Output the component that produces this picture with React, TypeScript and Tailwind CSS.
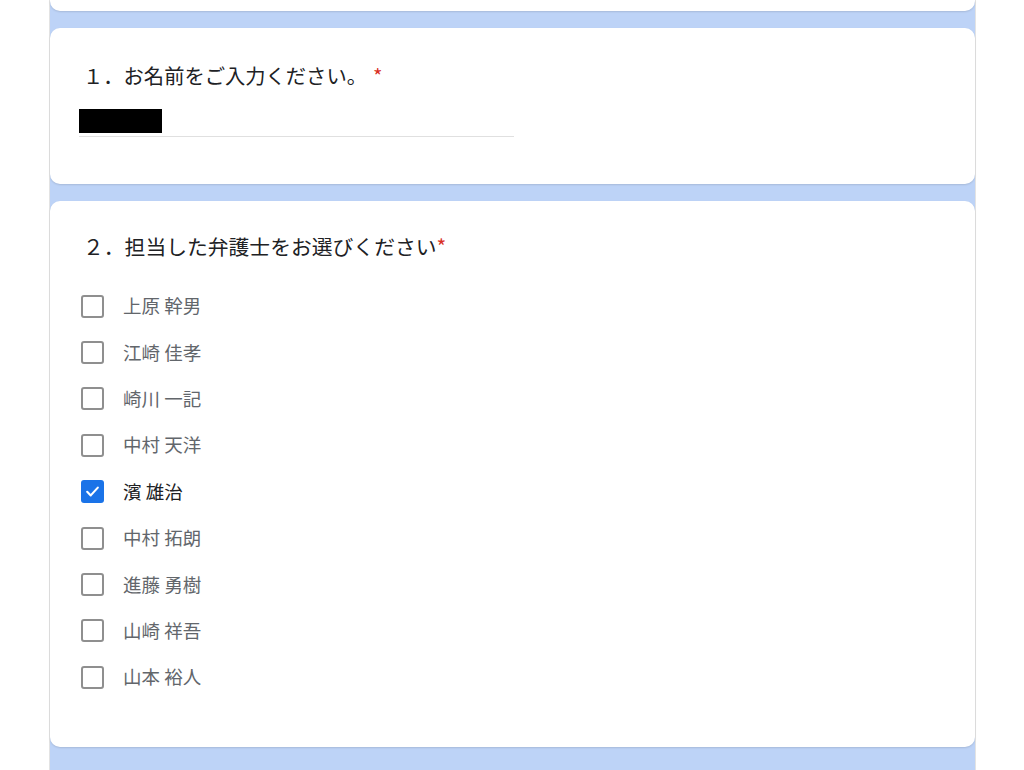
const lawyers = [
  "上原 幹男",
  "江崎 佳孝",
  "崎川 一記",
  "中村 天洋",
  "濱 雄治",
  "中村 拓朗",
  "進藤 勇樹",
  "山崎 祥吾",
  "山本 裕人",
];

const checked = "濱 雄治";

const font = "font-['Noto_Sans_CJK_JP','Noto_Sans',sans-serif]";

function Checkbox({ on }: { on: boolean }) {
  if (on) {
    return (
      <div className="flex h-[23px] w-[23px] shrink-0 items-center justify-center rounded-[3px] bg-[#1a73e8]">
        <svg width="17" height="17" viewBox="0 0 24 24" fill="none" stroke="white" strokeWidth="3" strokeLinecap="round" strokeLinejoin="round">
          <polyline points="4.5 12.5 9.5 17.5 19.5 6.5" />
        </svg>
      </div>
    );
  }
  return <div className="h-[23px] w-[23px] shrink-0 rounded-[3px] border-2 border-[#8f8f8f] bg-white" />;
}

export default function App() {
  return (
    <div className={`h-[770px] overflow-hidden bg-white ${font}`}>
      <div className="ml-[49px] h-full w-[927px] border-x border-[#e3e3e3] bg-[#bdd3f7]">
        {/* 前の設問の末尾 */}
        <div className="h-[11px] rounded-b-[10px] bg-white shadow-[0_1px_2px_rgba(0,0,0,0.12)]" />

        {/* 設問1 */}
        <div className="mt-[17px] h-[156px] rounded-[10px] bg-white px-[29px] pt-[33px] shadow-[0_1px_2px_rgba(0,0,0,0.12)]">
          <h2 className="ml-[4px] text-[20.3px] leading-[28px] text-[#202124]">
            １．お名前をご入力ください。
            <span className="ml-[6px] text-[#d93025]">*</span>
          </h2>
          <div className="mt-[20px] w-[435px] border-b border-[#e0e0e0] pb-[3px]">
            <div className="h-[24px] w-[83px] bg-black" />
          </div>
        </div>

        {/* 設問2 */}
        <div className="mt-[17px] h-[546px] rounded-[10px] bg-white px-[31px] pt-[31px] shadow-[0_1px_2px_rgba(0,0,0,0.12)]">
          <h2 className="ml-[2px] text-[20.8px] leading-[28px] text-[#202124]">
            ２．担当した弁護士をお選びください
            <span className="text-[#d93025]">*</span>
          </h2>
          <ul className="mt-[23px]">
            {lawyers.map((name) => {
              const on = name === checked;
              return (
                <li key={name} className="flex h-[46.4px] items-center gap-[19px]">
                  <Checkbox on={on} />
                  <span className={`text-[18.5px] ${on ? "text-[#202124]" : "text-[#62666b]"}`}>{name}</span>
                </li>
              );
            })}
          </ul>
        </div>
      </div>
    </div>
  );
}
